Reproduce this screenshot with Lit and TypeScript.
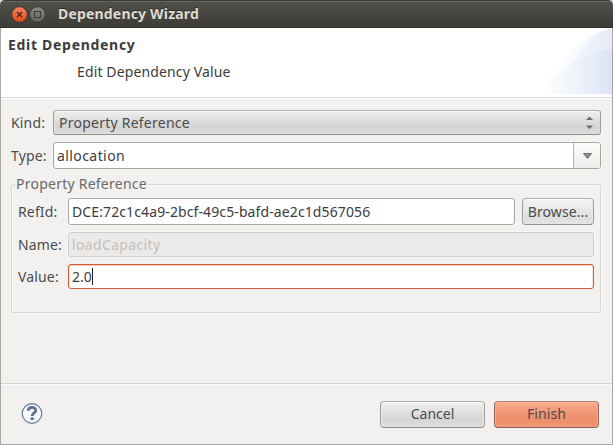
import { LitElement, html, css } from "lit";
import { customElement } from "lit/decorators.js";

@customElement("title-bar")
class TitleBar extends LitElement {
  static styles = css`
    :host {
      display: flex;
      align-items: center;
      height: 28px;
      box-sizing: border-box;
      padding: 0 11px;
      background: linear-gradient(#3c3b37 0, #3c3b37 1px, #65645d 1px, #65645d 2px, #504f48 2px, #3d3c37 27px, #302f2b 27px);
      border-radius: 5px 5px 0 0;
    }
    svg { flex: none; }
    .title {
      margin-left: 12px;
      color: #dfdbd2;
      font-weight: 700;
      font-size: 14px;
      letter-spacing: 0.18px;
      line-height: 28px;
      white-space: nowrap;
      text-shadow: 0 -1px 0 #2b2a27;
    }
  `;
  render() {
    return html`
      <svg width="35" height="18" viewBox="0 0 35 18">
        <defs>
          <linearGradient id="close" x2="0" y2="1">
            <stop offset="0" stop-color="#f58561" />
            <stop offset="1" stop-color="#df4a17" />
          </linearGradient>
          <linearGradient id="max" x2="0" y2="1">
            <stop offset="0" stop-color="#8b8a82" />
            <stop offset="1" stop-color="#62615a" />
          </linearGradient>
        </defs>
        <circle cx="8.5" cy="9.5" r="7.8" fill="url(#close)" stroke="#32312d" stroke-width=".8" />
        <path d="M6 7l5 5M11 7l-5 5" stroke="#46210f" stroke-width="1.1" />
        <circle cx="26.5" cy="9.5" r="7.8" fill="url(#max)" stroke="#32312d" stroke-width=".8" />
        <rect x="23.5" y="6.5" width="6" height="6" fill="none" stroke="#3b3a36" />
      </svg>
      <span class="title">Dependency Wizard</span>
    `;
  }
}

@customElement("wizard-banner")
class WizardBanner extends LitElement {
  static styles = css`
    :host {
      display: flex;
      justify-content: space-between;
      height: 70px;
      box-sizing: border-box;
      background: #fff;
      border-bottom: 1px solid #d8d6d3;
      color: #3c3c3c;
      font-size: 14px;
      line-height: 20px;
      white-space: nowrap;
    }
    .heading { margin: 7px 0 0 7px; font-weight: 700; letter-spacing: 0.7px; }
    .message { margin: 7px 0 0 76px; letter-spacing: 0.13px; }
    svg { flex: none; }
  `;
  render() {
    return html`
      <div>
        <div class="heading">Edit Dependency</div>
        <div class="message">Edit Dependency Value</div>
      </div>
      <svg width="75" height="66" viewBox="0 0 75 66">
        <defs>
          <linearGradient id="outer"><stop offset="0" stop-color="#fff" /><stop offset=".45" stop-color="#f9fbfe" /><stop offset="1" stop-color="#eff3fb" /></linearGradient>
          <linearGradient id="inner"><stop offset="0" stop-color="#f3f6fc" /><stop offset="1" stop-color="#e5ebf8" /></linearGradient>
          <linearGradient id="lower"><stop offset="0" stop-color="#fff" /><stop offset=".4" stop-color="#f2f6fc" /><stop offset="1" stop-color="#dae3f6" /></linearGradient>
        </defs>
        <path d="M3 66C20 34 42 7 75 0V66Z" fill="url(#outer)" />
        <path d="M35 38C44 19 58 4 75 0V38Z" fill="url(#inner)" />
        <path d="M3 66C20 44 45 24 75 21V66Z" fill="url(#lower)" />
      </svg>
    `;
  }
}

@customElement("app-root")
class AppRoot extends LitElement {
  static styles = css`
    :host {
      display: block;
      height: 445px;
      background: #d9d8d6;
      font-family: "Noto Sans", "Open Sans", sans-serif;
      font-size: 14px;
      color: #4c4c4c;
    }
    * { box-sizing: border-box; }
    .window { height: 445px; display: flex; flex-direction: column; }
    .body {
      flex: 1;
      display: flex;
      flex-direction: column;
      background: #f2f1f0;
      border: 1px solid #aba8a2;
      border-top: 0;
      overflow: hidden;
    }
    .form { flex: 1; padding: 11px 11px 0 10px; border-top: 1px solid #fff; margin-top: -1px; }
    wizard-banner { flex: none; margin-bottom: 1px; }
    .row { display: flex; align-items: center; white-space: nowrap; }
    .label { width: 42px; flex: none; line-height: 20px; letter-spacing: 0.15px; }
    .field {
      flex: 1;
      display: flex;
      align-items: center;
      height: 25px;
      border: 1px solid #aaa69f;
      border-radius: 3px;
      background: #fff;
      color: #3c3c3c;
      padding-left: 3px;
      line-height: 20px;
      box-shadow: 0 0 0 1px #f7f6f5;
    }
    .tall { height: 27px; }
    .select {
      justify-content: space-between;
      padding: 0 7px 0 5px;
      border-color: #b0aeab #a09e9b #92908d #a09e9b;
      background: linear-gradient(#efefee, #d3d3d3 70%, #dedede);
      box-shadow: inset 0 1px #f9f9f9, inset 1px 0 #e5e5e5;
      color: #4c4c4c;
      letter-spacing: 0.24px;
    }
    .type { margin-top: 7px; }
    .combo { justify-content: space-between; letter-spacing: 0.42px; }
    .drop {
      width: 27px;
      height: 25px;
      display: grid;
      place-items: center;
      border-left: 1px solid #b7b4af;
      border-radius: 0 2px 2px 0;
      background: linear-gradient(#fbfbfa, #ececeb);
    }
    .group {
      position: relative;
      margin-top: 15px;
      height: 129px;
      padding: 13px 6px 0;
      border: 1px solid #d8d5d2;
      border-radius: 3px;
      box-shadow: inset 1px 1px #fafaf9, 1px 1px #fafaf9;
    }
    .legend {
      position: absolute;
      left: 3px;
      top: -11px;
      padding: 0 1px;
      background: #f2f1f0;
      color: #696969;
      line-height: 20px;
      letter-spacing: 0.24px;
      white-space: nowrap;
    }
    .group .label { width: 50px; }
    .gap { margin-top: 7px; }
    .ref { letter-spacing: 0.11px; }
    .disabled { background: #ebeae9; border-color: #cfccc9; color: #c4bfba; letter-spacing: 0.35px; }
    .focus { border-color: #cf5c37; box-shadow: inset 0 1px #fbc9b6, inset 1px 0 #fde6dd, inset -1px 0 #fde6dd; }
    .caret { width: 1px; height: 17px; background: #222; }
    .button {
      display: flex;
      align-items: center;
      justify-content: center;
      flex: none;
      height: 27px;
      border: 1px solid;
      border-color: #b0aeab #a09e9b #92908d #a09e9b;
      border-radius: 4px;
      background: linear-gradient(#f1f1f1, #d5d5d5 70%, #dedede);
      box-shadow: inset 0 1px #fafafa, inset 1px 0 #e8e8e8, inset -1px 0 #e8e8e8;
      white-space: nowrap;
      line-height: 20px;
    }
    .browse { width: 72px; margin-left: 7px; letter-spacing: 0.1px; background: linear-gradient(#f4f4f4, #dedede 75%, #e4e4e4); }
    .footer {
      height: 61px;
      flex: none;
      display: flex;
      align-items: center;
      gap: 9px;
      padding: 0 13px 0 20px;
      border-top: 1px solid #d7d5d2;
      box-shadow: inset 0 1px #fcfcfc;
    }
    .help { flex: none; margin-right: auto; }
    .action { width: 105px; }
    .primary {
      letter-spacing: 0.1px;
      border-color: #a8837a #94695d #8b6154 #94695d;
      background: linear-gradient(#faad91, #f19370 50%, #ef8e69 80%, #f29b7a);
      box-shadow: inset 0 1px #fdb79e, inset 1px 0 #f8a98c, inset -1px 0 #f8a98c;
    }
  `;
  render() {
    return html`
      <div class="window">
        <title-bar></title-bar>
        <div class="body">
          <wizard-banner></wizard-banner>
          <div class="form">
            <div class="row">
              <span class="label">Kind:</span>
              <div class="field select">
                <span>Property Reference</span>
                <svg width="7" height="13" viewBox="0 0 7 13"><path d="M0 4L3.5 0.5 7 4ZM0 9.5H7L3.5 13Z" fill="#6b6b6b" /></svg>
              </div>
            </div>
            <div class="row type">
              <span class="label">Type:</span>
              <div class="field tall combo">
                <span>allocation</span>
                <span class="drop"><svg width="9" height="6" viewBox="0 0 9 6"><path d="M.5 .5H8.5L4.5 5.5Z" fill="#8d8d8d" stroke="#666" stroke-width=".9" /></svg></span>
              </div>
            </div>
            <div class="group">
              <span class="legend">Property Reference</span>
              <div class="row">
                <span class="label">RefId:</span>
                <div class="field tall"><span class="ref">DCE:72c1c4a9-2bcf-49c5-bafd-ae2c1d567056</span></div>
                <div class="button browse">Browse...</div>
              </div>
              <div class="row gap">
                <span class="label">Name:</span>
                <div class="field disabled">loadCapacity</div>
              </div>
              <div class="row gap">
                <span class="label">Value:</span>
                <div class="field focus">2.0<span class="caret"></span></div>
              </div>
            </div>
          </div>
          <div class="footer">
            <svg class="help" width="22" height="22" viewBox="0 0 22 22">
              <circle cx="11" cy="10.5" r="9.8" fill="#f8f9fa" stroke="#657899" stroke-width="1.2" />
              <path d="M7.2 7.7C7.2 3.3 14.8 3.4 14.8 7.3C14.8 9.9 11.2 10 11.2 12.9" fill="none" stroke="#5d7194" stroke-width="2.8" />
              <rect x="9.6" y="14.3" width="3.2" height="2.8" rx=".9" fill="#5d7194" />
            </svg>
            <div class="button action">Cancel</div>
            <div class="button action primary">Finish</div>
          </div>
        </div>
      </div>
    `;
  }
}
